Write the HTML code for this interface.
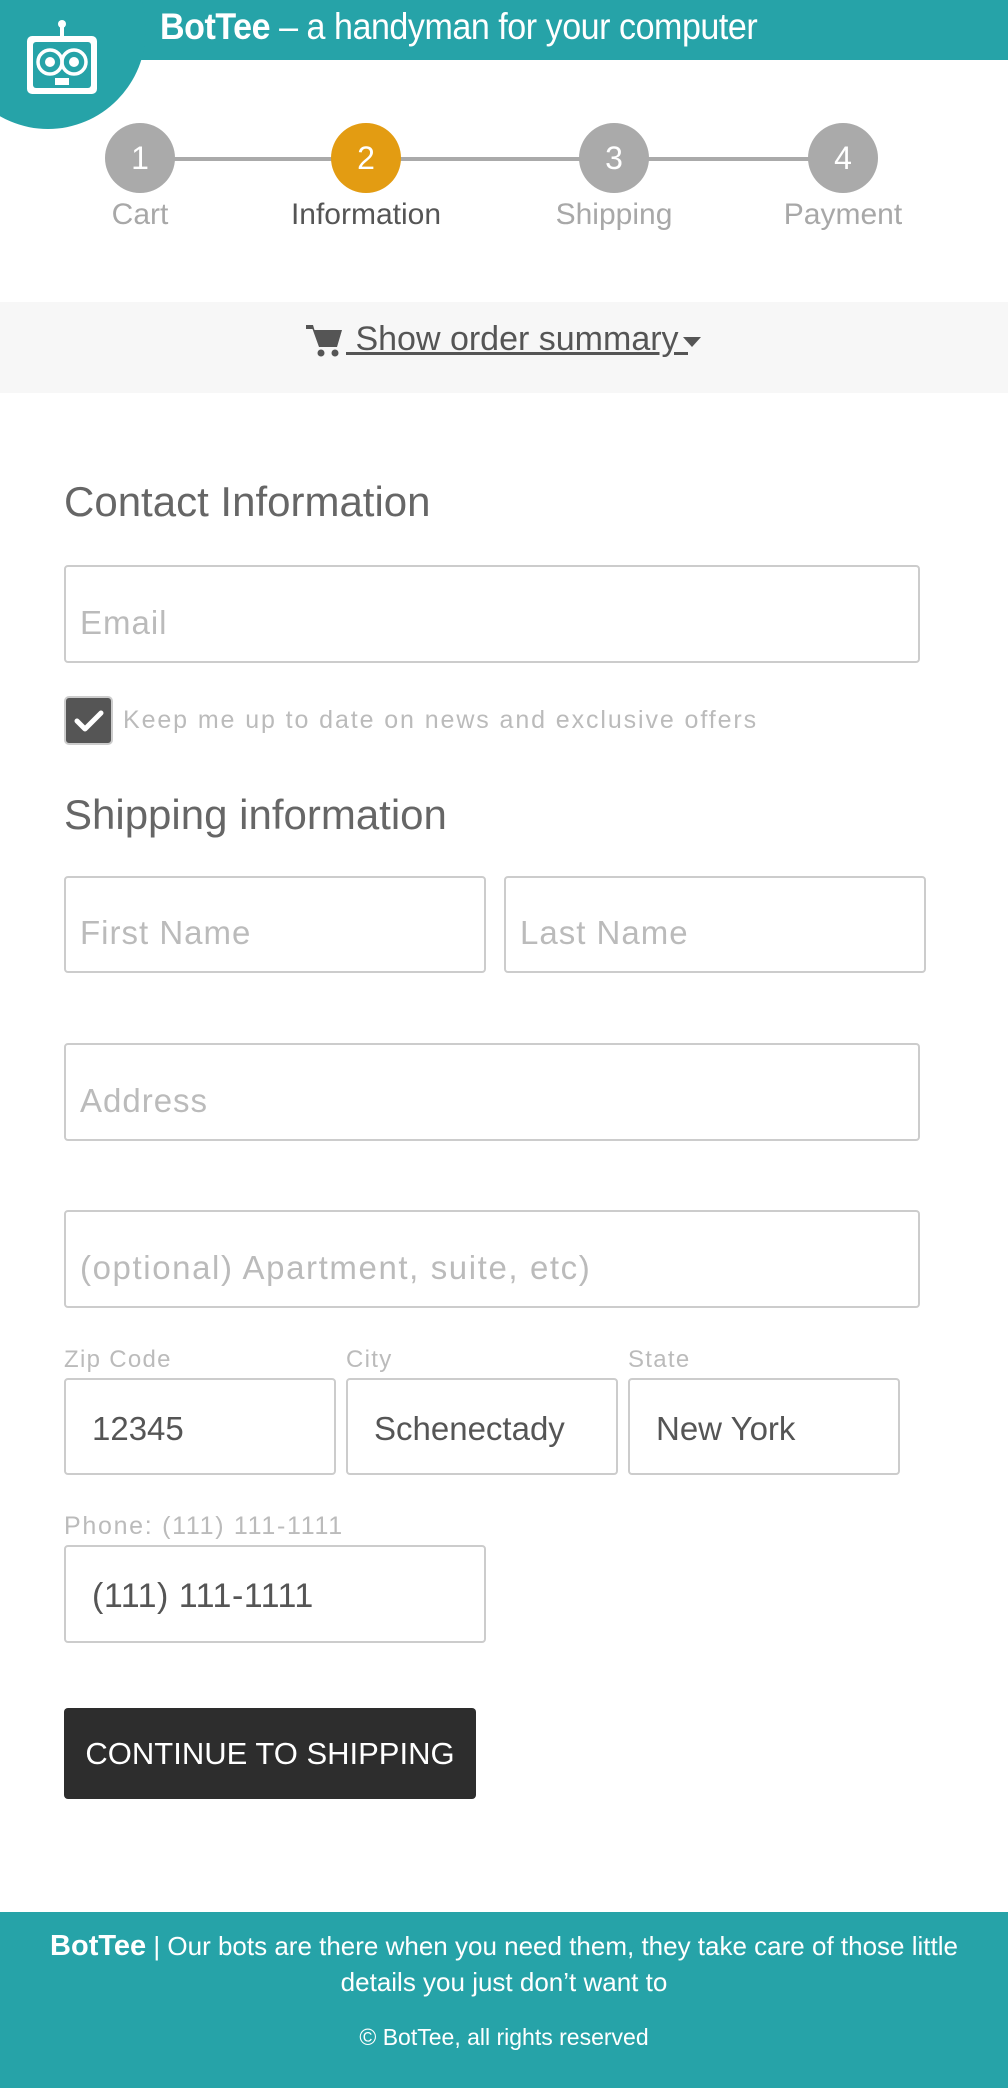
<!DOCTYPE html>
<html><head><meta charset="utf-8"><style>
*{margin:0;padding:0;box-sizing:border-box}
body{width:1008px;height:2088px;position:relative;background:#fff;font-family:"Liberation Sans",sans-serif;overflow:hidden}
.a{position:absolute}
.hdr{left:0;top:0;width:1008px;height:60px;background:#26a3a8}
.title{left:160px;top:6px;color:#fff;font-size:37px;white-space:nowrap;transform:scaleX(0.92);transform-origin:0 0;letter-spacing:-0.5px}
.circ{width:70px;height:70px;border-radius:50%;background:#aaa;color:#fff;font-size:32px;text-align:center;line-height:70px;top:123px}
.lbl{top:198px;font-size:30px;color:#a8a8a8;text-align:center;width:240px}
.band{left:0;top:302px;width:1008px;height:91px;background:#f7f7f7}
h2{position:absolute;left:64px;font-weight:normal;font-size:42px;color:#666}
.in{position:absolute;border:2px solid #ccc;border-radius:4px;font-size:33px;color:#bbb;padding-left:14px;padding-top:17px;display:flex;align-items:center;letter-spacing:1px}
.v{color:#555;padding-left:12px;letter-spacing:0;font-size:33px}
.sl{position:absolute;font-size:24px;color:#bbb;letter-spacing:1.3px}
</style></head><body>
<div class="a hdr"></div>
<div class="a" style="left:-50px;top:-70px;width:196px;height:199px;border-radius:50%;background:#26a3a8"></div>
<svg class="a" style="left:22px;top:18px" width="80" height="80" viewBox="0 0 80 80">
<circle cx="40" cy="6" r="4" fill="#fff"/><rect x="38" y="6" width="4" height="12" fill="#fff"/>
<rect x="5" y="18" width="70" height="58" rx="5" fill="#fff"/>
<rect x="11" y="24" width="58" height="46" rx="3" fill="#26a3a8"/>
<circle cx="28" cy="44" r="12" fill="none" stroke="#fff" stroke-width="3.5"/><circle cx="28" cy="44" r="5" fill="#fff"/>
<circle cx="52" cy="44" r="12" fill="none" stroke="#fff" stroke-width="3.5"/><circle cx="52" cy="44" r="5" fill="#fff"/>
<rect x="33" y="60" width="14" height="7" fill="#fff"/>
</svg>
<div class="a title"><b>BotTee</b> – a handyman for your computer</div>
<div class="a" style="left:140px;top:157px;width:703px;height:4px;background:#aaa"></div>
<div class="a circ" style="left:105px">1</div>
<div class="a circ" style="left:331px;background:#e39c12">2</div>
<div class="a circ" style="left:579px">3</div>
<div class="a circ" style="left:808px">4</div>
<div class="a lbl" style="left:20px">Cart</div>
<div class="a lbl" style="left:246px;color:#555">Information</div>
<div class="a lbl" style="left:494px">Shipping</div>
<div class="a lbl" style="left:723px">Payment</div>
<div class="a band"></div>
<svg class="a" style="left:306px;top:324px" width="36" height="34" viewBox="0 0 36 34"><path d="M0 1h7l1.5 5H36l-5 17H13L6.5 5H0z" fill="#555"/><circle cx="15" cy="29" r="3.5" fill="#555"/><circle cx="29" cy="29" r="3.5" fill="#555"/></svg>
<div class="a" style="left:346px;top:320px;font-size:34px;color:#555;text-decoration:underline;white-space:pre"> Show order summary </div>
<div class="a" style="left:683px;top:337px;width:0;height:0;border-left:9px solid transparent;border-right:9px solid transparent;border-top:10px solid #555"></div>
<h2 style="top:478px">Contact Information</h2>
<div class="in" style="left:64px;top:565px;width:856px;height:98px">Email</div>
<div class="a" style="left:64px;top:696px;width:49px;height:49px;border-radius:5px;background:#555;border:2px solid #ccc"></div>
<svg class="a" style="left:72px;top:704px" width="34" height="34" viewBox="0 0 34 34"><path d="M5 17l8 8L29 9" fill="none" stroke="#fff" stroke-width="5" stroke-linecap="round" stroke-linejoin="round"/></svg>
<div class="a" style="left:123px;top:706px;font-size:25px;color:#bbb;letter-spacing:1.9px;white-space:nowrap">Keep me up to date on news and exclusive offers</div>
<h2 style="top:791px">Shipping information</h2>
<div class="in" style="left:64px;top:876px;width:422px;height:97px">First Name</div>
<div class="in" style="left:504px;top:876px;width:422px;height:97px">Last Name</div>
<div class="in" style="left:64px;top:1043px;width:856px;height:98px">Address</div>
<div class="in" style="left:64px;top:1210px;width:856px;height:98px;letter-spacing:1.6px">(optional) Apartment, suite, etc)</div>
<div class="sl" style="left:64px;top:1346px">Zip Code</div>
<div class="sl" style="left:346px;top:1346px">City</div>
<div class="sl" style="left:628px;top:1346px">State</div>
<div class="in" style="left:64px;top:1378px;width:272px;height:97px;padding-top:4px"><span class="v">12345</span></div>
<div class="in" style="left:346px;top:1378px;width:272px;height:97px;padding-top:4px"><span class="v">Schenectady</span></div>
<div class="in" style="left:628px;top:1378px;width:272px;height:97px;padding-top:4px"><span class="v">New York</span></div>
<div class="sl" style="left:64px;top:1512px;letter-spacing:1.7px;font-size:25px">Phone: (111) 111-1111</div>
<div class="in" style="left:64px;top:1545px;width:422px;height:98px;padding-top:4px"><span class="v" style="font-size:34px;letter-spacing:0.5px">(111) 111-1111</span></div>
<div class="a" style="left:64px;top:1708px;width:412px;height:91px;background:#2d2d2d;border-radius:4px;color:#fff;font-size:31px;text-align:center;line-height:91px">CONTINUE TO SHIPPING</div>
<div class="a" style="left:0;top:1912px;width:1008px;height:176px;background:#26a3a8"></div>
<div class="a" style="left:30px;top:1928px;width:948px;text-align:center;color:#fff;font-size:26px;line-height:36px"><b style="font-size:29px">BotTee</b> | Our bots are there when you need them, they take care of those little details you just don’t want to</div>
<div class="a" style="left:0;top:2024px;width:1008px;text-align:center;color:#fff;font-size:23px">© BotTee, all rights reserved</div>
</body></html>
